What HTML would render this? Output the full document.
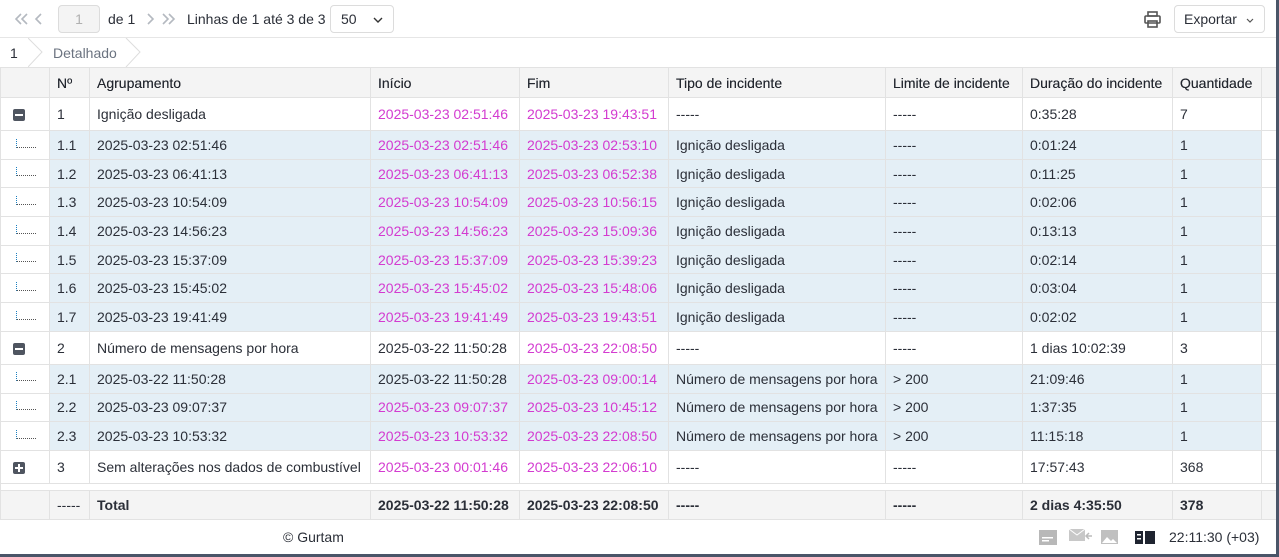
<!DOCTYPE html>
<html><head><meta charset="utf-8"><style>
*{box-sizing:border-box;margin:0;padding:0}
body{width:1279px;height:557px;overflow:hidden;background:#fff;font-family:"Liberation Sans",sans-serif;font-size:14px;color:#2b2f38;position:relative}
.frame{position:absolute;left:1276px;top:0;width:3px;height:557px;background:#4a5568;z-index:5}
.bottomb{position:absolute;left:0;top:554px;width:1279px;height:3px;background:#4a5568;z-index:5}
.tb{position:absolute;top:0;left:0;width:1276px;height:38px;border-bottom:1px solid #e6e6e6}
.pg{position:absolute;left:58px;top:5px;width:42px;height:28px;border:1px solid #dcdcdc;border-radius:4px;background:#f4f4f4;color:#b0b0b0;text-align:center;line-height:26px}
.t{position:absolute;top:11px}
.sel{position:absolute;left:330px;top:5px;width:64px;height:28px;border:1px solid #dcdcdc;border-radius:4px;padding:5px 10px}
.exp{position:absolute;left:1174px;top:5px;width:91px;height:28px;border:1px solid #dcdcdc;border-radius:4px;padding:5px 9px}
.bc{position:absolute;top:38px;left:0;height:29px;width:1276px}
table{position:absolute;top:67px;left:0;border-collapse:collapse;table-layout:fixed;width:1276px}
td,th{border:1px solid #e2e2e2;padding:0 7px;white-space:nowrap;overflow:hidden;text-align:left;font-weight:normal}
th{background:#f4f4f4;height:30px;color:#23272f;text-shadow:0 0 .3px #23272f}
tr.p td{height:33px;background:#fff}
tr.c td{height:28.7px;background:#e4eff6}
tr.c td:first-child{background:#fff}
.m{color:#d33bd0}
.tot td{background:#f4f4f4;height:29px;font-weight:bold}
.box{display:inline-block;width:12px;height:12px;background:#4f5560;border-radius:2px;position:relative;vertical-align:middle;margin-left:5px}
.box:after{content:"";position:absolute;left:2px;top:5px;width:8px;height:2px;background:#fff}
.plus:before{content:"";position:absolute;left:5px;top:2px;width:2px;height:8px;background:#fff}
.tr{display:inline-block;width:20px;height:9px;border-left:1px dotted #1a7fc0;border-bottom:1px dotted #555;margin-left:8px;vertical-align:middle;margin-top:-6px}
.ft{position:absolute;top:520px;left:0;width:1276px;height:34px}
.chev{position:absolute;top:12px}
</style></head><body>
<div class="frame"></div><div class="bottomb"></div>
<div class="tb">
<svg class="chev" style="left:15px" width="30" height="14" fill="none" stroke="#b4b9c0" stroke-width="1.6"><polyline points="6,2 1,7 6,12"/><polyline points="12,2 7,7 12,12"/><polyline points="26,2 21,7 26,12"/></svg>
<div class="pg">1</div>
<span class="t" style="left:108px">de 1</span>
<svg class="chev" style="left:147px" width="32" height="14" fill="none" stroke="#b4b9c0" stroke-width="1.6"><polyline points="1,2 6,7 1,12"/><polyline points="16,2 21,7 16,12"/><polyline points="22,2 27,7 22,12"/></svg>
<span class="t" style="left:187px">Linhas de 1 até 3 de 3</span>
<div class="sel">50 <svg style="position:absolute;right:10px;top:11px" width="10" height="6" fill="none" stroke="#333" stroke-width="1.4"><polyline points="1,1 5,5 9,1"/></svg></div>
<svg style="position:absolute;left:1143px;top:10px" width="19" height="19" viewBox="0 0 19 19" fill="none" stroke="#555" stroke-width="1.6"><rect x="5" y="2" width="9" height="4"/><rect x="2" y="6" width="15" height="7" rx="1"/><rect x="5" y="11" width="9" height="6"/></svg>
<div class="exp">Exportar <svg style="position:absolute;right:10px;top:12px" width="8" height="5" fill="none" stroke="#555" stroke-width="1.2"><polyline points="1,1 4,4 7,1"/></svg></div>
</div>
<div class="bc">
<span style="position:absolute;left:10px;top:7px">1</span>
<svg style="position:absolute;left:28px;top:0" width="120" height="29"><polyline points="0,0 14,14 0,29" fill="none" stroke="#ddd"/><polyline points="98,0 112,14 98,29" fill="none" stroke="#ddd"/></svg>
<span style="position:absolute;left:53px;top:7px;color:#6b7380">Detalhado</span>
</div>
<table>
<colgroup><col style="width:49px"><col style="width:40px"><col style="width:281px"><col style="width:149px"><col style="width:149px"><col style="width:217px"><col style="width:137px"><col style="width:150px"><col style="width:89px"><col style="width:15px"></colgroup>
<tr><th></th><th>Nº</th><th>Agrupamento</th><th>Início</th><th>Fim</th><th>Tipo de incidente</th><th>Limite de incidente</th><th>Duração do incidente</th><th>Quantidade</th><th></th></tr>
<tr class="p"><td><span class="box"></span></td><td>1</td><td>Ignição desligada</td><td class="m">2025-03-23 02:51:46</td><td class="m">2025-03-23 19:43:51</td><td>-----</td><td>-----</td><td>0:35:28</td><td>7</td><td></td></tr>
<tr class="c"><td><span class="tr"></span></td><td>1.1</td><td>2025-03-23 02:51:46</td><td class="m">2025-03-23 02:51:46</td><td class="m">2025-03-23 02:53:10</td><td>Ignição desligada</td><td>-----</td><td>0:01:24</td><td>1</td><td style="background:#fff"></td></tr>
<tr class="c"><td><span class="tr"></span></td><td>1.2</td><td>2025-03-23 06:41:13</td><td class="m">2025-03-23 06:41:13</td><td class="m">2025-03-23 06:52:38</td><td>Ignição desligada</td><td>-----</td><td>0:11:25</td><td>1</td><td style="background:#fff"></td></tr>
<tr class="c"><td><span class="tr"></span></td><td>1.3</td><td>2025-03-23 10:54:09</td><td class="m">2025-03-23 10:54:09</td><td class="m">2025-03-23 10:56:15</td><td>Ignição desligada</td><td>-----</td><td>0:02:06</td><td>1</td><td style="background:#fff"></td></tr>
<tr class="c"><td><span class="tr"></span></td><td>1.4</td><td>2025-03-23 14:56:23</td><td class="m">2025-03-23 14:56:23</td><td class="m">2025-03-23 15:09:36</td><td>Ignição desligada</td><td>-----</td><td>0:13:13</td><td>1</td><td style="background:#fff"></td></tr>
<tr class="c"><td><span class="tr"></span></td><td>1.5</td><td>2025-03-23 15:37:09</td><td class="m">2025-03-23 15:37:09</td><td class="m">2025-03-23 15:39:23</td><td>Ignição desligada</td><td>-----</td><td>0:02:14</td><td>1</td><td style="background:#fff"></td></tr>
<tr class="c"><td><span class="tr"></span></td><td>1.6</td><td>2025-03-23 15:45:02</td><td class="m">2025-03-23 15:45:02</td><td class="m">2025-03-23 15:48:06</td><td>Ignição desligada</td><td>-----</td><td>0:03:04</td><td>1</td><td style="background:#fff"></td></tr>
<tr class="c"><td><span class="tr"></span></td><td>1.7</td><td>2025-03-23 19:41:49</td><td class="m">2025-03-23 19:41:49</td><td class="m">2025-03-23 19:43:51</td><td>Ignição desligada</td><td>-----</td><td>0:02:02</td><td>1</td><td style="background:#fff"></td></tr>
<tr class="p"><td><span class="box"></span></td><td>2</td><td>Número de mensagens por hora</td><td>2025-03-22 11:50:28</td><td class="m">2025-03-23 22:08:50</td><td>-----</td><td>-----</td><td>1 dias 10:02:39</td><td>3</td><td></td></tr>
<tr class="c"><td><span class="tr"></span></td><td>2.1</td><td>2025-03-22 11:50:28</td><td>2025-03-22 11:50:28</td><td class="m">2025-03-23 09:00:14</td><td>Número de mensagens por hora</td><td>&gt; 200</td><td>21:09:46</td><td>1</td><td style="background:#fff"></td></tr>
<tr class="c"><td><span class="tr"></span></td><td>2.2</td><td>2025-03-23 09:07:37</td><td class="m">2025-03-23 09:07:37</td><td class="m">2025-03-23 10:45:12</td><td>Número de mensagens por hora</td><td>&gt; 200</td><td>1:37:35</td><td>1</td><td style="background:#fff"></td></tr>
<tr class="c"><td><span class="tr"></span></td><td>2.3</td><td>2025-03-23 10:53:32</td><td class="m">2025-03-23 10:53:32</td><td class="m">2025-03-23 22:08:50</td><td>Número de mensagens por hora</td><td>&gt; 200</td><td>11:15:18</td><td>1</td><td style="background:#fff"></td></tr>
<tr class="p"><td><span class="box plus"></span></td><td>3</td><td>Sem alterações nos dados de combustível</td><td class="m">2025-03-23 00:01:46</td><td class="m">2025-03-23 22:06:10</td><td>-----</td><td>-----</td><td>17:57:43</td><td>368</td><td></td></tr>
<tr><td style="height:7px;border-bottom:0;border-top:1px solid #e2e2e2" colspan="10"></td></tr>
<tr class="tot"><td></td><td style="font-weight:normal">-----</td><td>Total</td><td>2025-03-22 11:50:28</td><td>2025-03-23 22:08:50</td><td>-----</td><td>-----</td><td>2 dias 4:35:50</td><td>378</td><td></td></tr>
</table>
<div class="ft">
<span style="position:absolute;left:283px;top:9px">© Gurtam</span>
<svg style="position:absolute;left:1039px;top:10px" width="18" height="15"><rect width="18" height="15" fill="#b8b8b8"/><rect x="3" y="7" width="11" height="1.5" fill="#fff"/><rect x="3" y="10" width="7" height="1.5" fill="#fff"/></svg>
<svg style="position:absolute;left:1069px;top:8px" width="24" height="15"><rect y="1" width="16" height="12" fill="#c8c8c8"/><polyline points="0,1 8,7 16,1" stroke="#fff" fill="none"/><path d="M17 8h6M20 5l-3 3 3 3" stroke="#bbb" fill="none" stroke-width="1.5"/></svg>
<svg style="position:absolute;left:1101px;top:10px" width="17" height="14"><rect width="17" height="14" fill="#c0c0c0"/><polygon points="1,13 6,7 10,11 12,9 16,13" fill="#fff"/></svg>
<svg style="position:absolute;left:1135px;top:11px" width="20" height="13"><rect width="8" height="13" fill="#1f2430"/><rect x="10" width="10" height="13" fill="#1f2430"/><rect x="2" y="3" width="4" height="1.5" fill="#fff"/><rect x="2" y="7" width="4" height="1.5" fill="#fff"/></svg>
<span style="position:absolute;left:1169px;top:9px">22:11:30 (+03)</span>
</div>
</body></html>
